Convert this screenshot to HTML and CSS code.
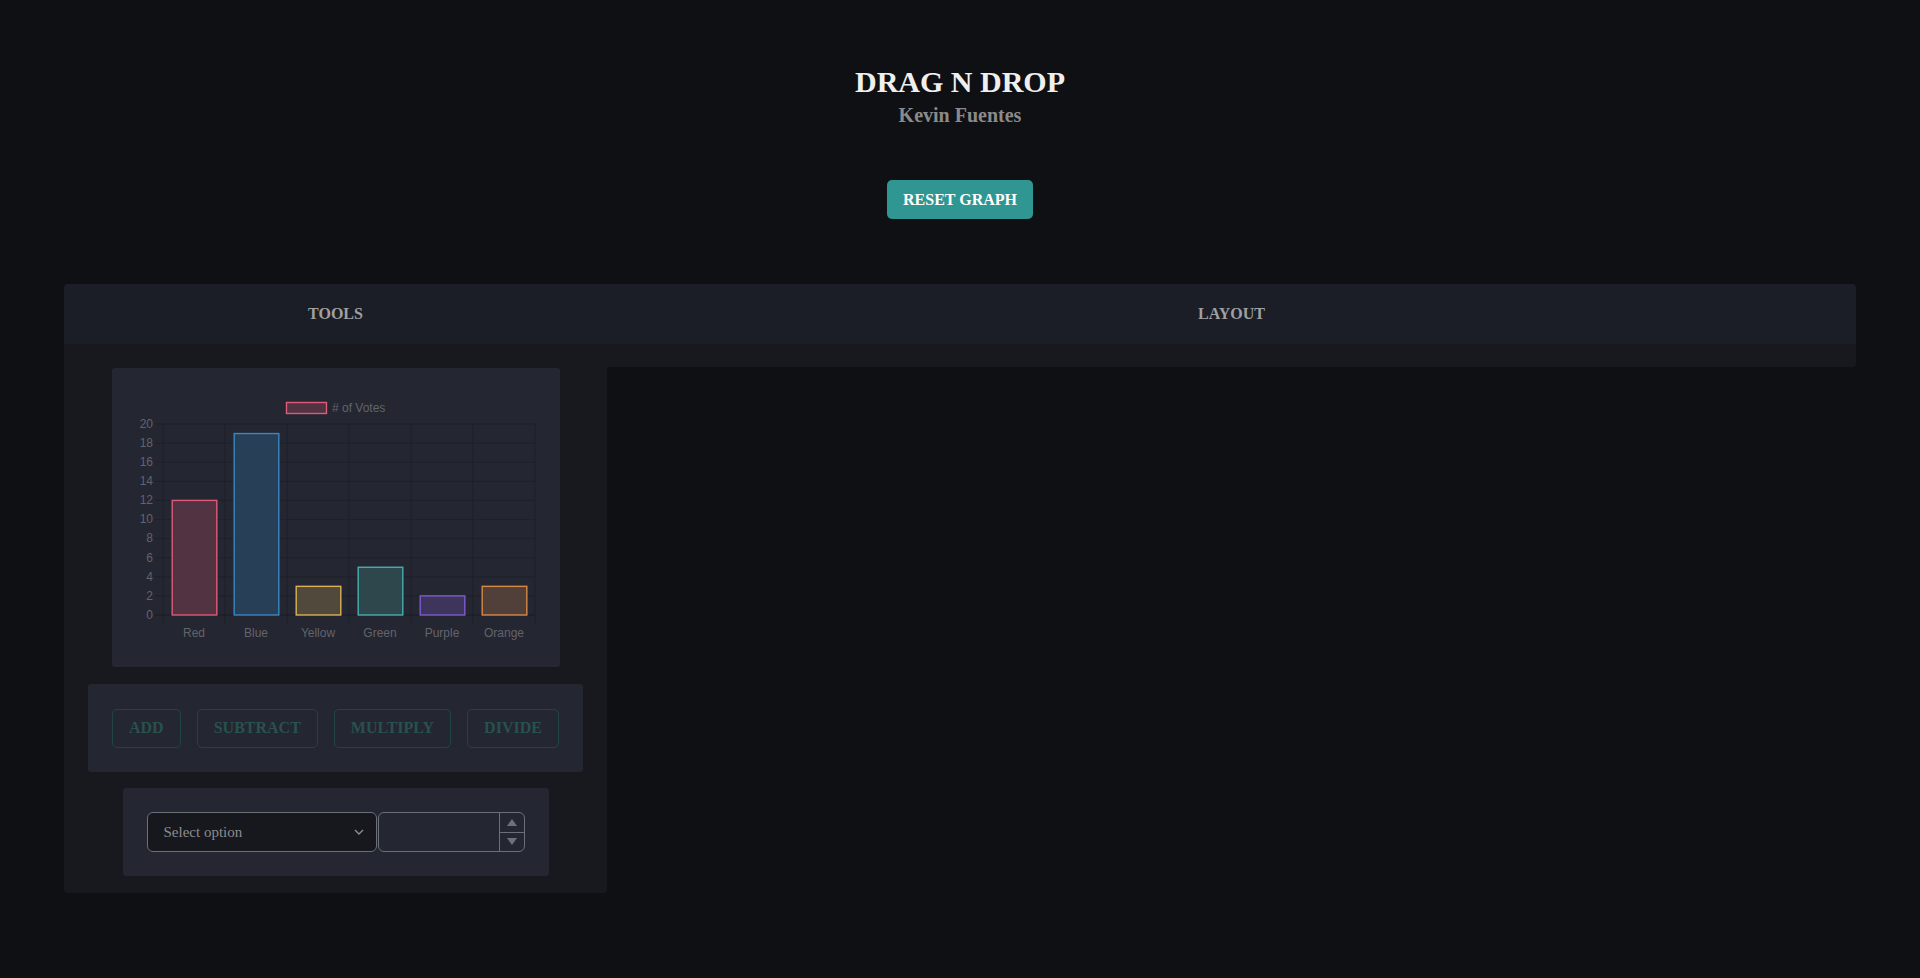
FILE: index.html
```html
<!DOCTYPE html>
<html>
<head>
<meta charset="utf-8">
<title>Drag N Drop</title>
<link rel="stylesheet" href="styles.css">
</head>
<body>
<header class="top">
  <h1 class="title">DRAG N DROP</h1>
  <h2 class="author">Kevin Fuentes</h2>
  <button class="reset">RESET GRAPH</button>
</header>
<main class="board">
  <section class="tools">
    <div class="col-head">TOOLS</div>
    <div class="tools-body">
      <div class="card chart-card">
        <svg class="chart" width="448" height="299" viewBox="0 0 448 299">
          <g class="grid">
            <line x1="43" y1="56" x2="423" y2="56"/>
            <line x1="43" y1="75.1" x2="423" y2="75.1"/>
            <line x1="43" y1="94.2" x2="423" y2="94.2"/>
            <line x1="43" y1="113.3" x2="423" y2="113.3"/>
            <line x1="43" y1="132.4" x2="423" y2="132.4"/>
            <line x1="43" y1="151.5" x2="423" y2="151.5"/>
            <line x1="43" y1="170.6" x2="423" y2="170.6"/>
            <line x1="43" y1="189.7" x2="423" y2="189.7"/>
            <line x1="43" y1="208.8" x2="423" y2="208.8"/>
            <line x1="43" y1="227.9" x2="423" y2="227.9"/>
            <line x1="51" y1="56" x2="51" y2="255"/>
            <line x1="113" y1="56" x2="113" y2="255"/>
            <line x1="175" y1="56" x2="175" y2="255"/>
            <line x1="237" y1="56" x2="237" y2="255"/>
            <line x1="299" y1="56" x2="299" y2="255"/>
            <line x1="361" y1="56" x2="361" y2="255"/>
            <line x1="423" y1="56" x2="423" y2="255"/>
          </g>
          <line class="zero" x1="43" y1="247" x2="423" y2="247"/>
          <g class="ylab">
            <text x="41" y="251">0</text>
            <text x="41" y="232">2</text>
            <text x="41" y="213">4</text>
            <text x="41" y="194">6</text>
            <text x="41" y="174">8</text>
            <text x="41" y="155">10</text>
            <text x="41" y="136">12</text>
            <text x="41" y="117">14</text>
            <text x="41" y="98">16</text>
            <text x="41" y="79">18</text>
            <text x="41" y="60">20</text>
          </g>
          <rect class="bar red" x="60.2" y="132.4" width="44.6" height="114.6"/>
          <rect class="bar blue" x="122.2" y="65.55" width="44.6" height="181.45"/>
          <rect class="bar yellow" x="184.2" y="218.35" width="44.6" height="28.65"/>
          <rect class="bar green" x="246.2" y="199.25" width="44.6" height="47.75"/>
          <rect class="bar purple" x="308.2" y="227.9" width="44.6" height="19.1"/>
          <rect class="bar orange" x="370.2" y="218.35" width="44.6" height="28.65"/>
          <g class="xlab">
            <text x="82" y="269">Red</text>
            <text x="144" y="269">Blue</text>
            <text x="206" y="269">Yellow</text>
            <text x="268" y="269">Green</text>
            <text x="330" y="269">Purple</text>
            <text x="392" y="269">Orange</text>
          </g>
          <rect class="bar red" x="174.5" y="34.5" width="40" height="11"/>
          <text class="legend" x="220" y="44">#&#160;of Votes</text>
        </svg>
      </div>
      <div class="card ops-card">
        <button class="op">ADD</button>
        <button class="op">SUBTRACT</button>
        <button class="op">MULTIPLY</button>
        <button class="op">DIVIDE</button>
      </div>
      <div class="card input-card">
        <div class="select">
          <span>Select option</span>
          <svg width="10" height="6" viewBox="0 0 10 6"><path d="M1 1 L5 5 L9 1" fill="none" stroke="#8a8c94" stroke-width="1.4"/></svg>
        </div>
        <div class="number">
          <div class="num-field"></div>
          <div class="spin">
            <div class="spin-btn"><svg width="10" height="7" viewBox="0 0 10 7"><path d="M0 7 L5 0 L10 7 Z" fill="#6f717b"/></svg></div>
            <div class="spin-btn"><svg width="10" height="7" viewBox="0 0 10 7"><path d="M0 0 L5 7 L10 0 Z" fill="#6f717b"/></svg></div>
          </div>
        </div>
      </div>
    </div>
  </section>
  <section class="layout">
    <div class="col-head">LAYOUT</div>
    <div class="layout-body"></div>
  </section>
</main>
</body>
</html>
```
FILE: styles.css
```css
html, body {
  margin: 0;
  padding: 0;
}
body {
  background: #0f1013;
  font-family: "Liberation Serif", "Times New Roman", serif;
  min-height: 978px;
}
.top {
  display: flex;
  flex-direction: column;
  align-items: center;
  padding-top: 64px;
}
.title {
  margin: 0;
  font-size: 30px;
  line-height: 36px;
  font-weight: bold;
  color: #efefef;
}
.author {
  margin: 3px 0 0;
  font-size: 20px;
  line-height: 24px;
  font-weight: bold;
  color: #8a8a8a;
}
.reset {
  margin-top: 53px;
  width: 146px;
  height: 39px;
  border: none;
  border-radius: 5px;
  background: #2f9691;
  color: #ffffff;
  font-family: "Liberation Serif", "Times New Roman", serif;
  font-size: 16px;
  font-weight: bold;
  padding: 0;
}
.board {
  margin: 65px 64px 0;
  display: grid;
  grid-template-columns: 543px 1fr;
  align-items: start;
}
.col-head {
  height: 60px;
  background: #1b1e26;
  display: flex;
  align-items: center;
  justify-content: center;
  color: #a0a0a0;
  font-size: 16px;
  font-weight: bold;
}
.tools {
  background: #18191e;
  border-radius: 4px 0 4px 4px;
  overflow: hidden;
}
.layout {
  background: #18191e;
  border-radius: 0 4px 4px 0;
  overflow: hidden;
}
.layout-body {
  height: 23px;
}
.tools-body {
  display: flex;
  flex-direction: column;
  align-items: center;
  padding: 24px 0 17px;
}
.card {
  background: #242631;
  border-radius: 3px;
}
.chart-card {
  width: 448px;
  height: 299px;
}
.chart {
  display: block;
}
.grid line {
  stroke: #1f2129;
  stroke-width: 1;
}
.zero {
  stroke: #1b1d24;
  stroke-width: 1.2;
}
.ylab text {
  font-family: "Liberation Sans", Arial, sans-serif;
  font-size: 12px;
  fill: #62646c;
  text-anchor: end;
}
.xlab text {
  font-family: "Liberation Sans", Arial, sans-serif;
  font-size: 12px;
  fill: #62646c;
  text-anchor: middle;
}
.legend {
  font-family: "Liberation Sans", Arial, sans-serif;
  font-size: 12px;
  fill: #62646c;
}
.bar {
  stroke-width: 1.4;
}
.red { fill: #513342; stroke: #dd5c7a; }
.blue { fill: #273f57; stroke: #3888c2; }
.yellow { fill: #51493c; stroke: #dab258; }
.green { fill: #2d474d; stroke: #4aaeae; }
.purple { fill: #3d355a; stroke: #7f5bd0; }
.orange { fill: #51403a; stroke: #d88a45; }
.ops-card {
  margin-top: 17px;
  width: 495px;
  height: 88px;
  box-sizing: border-box;
  padding: 0 24px;
  display: flex;
  align-items: center;
  gap: 16px;
}
.op {
  height: 39px;
  padding: 0 16px;
  border: 1px solid #204548;
  border-radius: 5px;
  background: transparent;
  color: #28514f;
  font-family: "Liberation Serif", "Times New Roman", serif;
  font-size: 16px;
  font-weight: bold;
}
.input-card {
  margin-top: 16px;
  width: 426px;
  height: 88px;
  box-sizing: border-box;
  padding: 0 24px;
  display: flex;
  align-items: center;
  gap: 1px;
}
.select {
  width: 230px;
  height: 40px;
  box-sizing: border-box;
  border: 1px solid #6c6e78;
  border-radius: 6px;
  background: #17181d;
  display: flex;
  align-items: center;
  justify-content: space-between;
  padding: 0 12px 0 16px;
  color: #8c8c8c;
  font-size: 15px;
}
.number {
  width: 147px;
  height: 40px;
  box-sizing: border-box;
  border: 1px solid #6c6e78;
  border-radius: 6px;
  display: flex;
}
.num-field {
  flex: 1;
}
.spin {
  width: 24px;
  border-left: 1px solid #6c6e78;
  display: flex;
  flex-direction: column;
}
.spin-btn {
  flex: 1;
  display: flex;
  align-items: center;
  justify-content: center;
}
.spin-btn + .spin-btn {
  border-top: 1px solid #6c6e78;
}
```
